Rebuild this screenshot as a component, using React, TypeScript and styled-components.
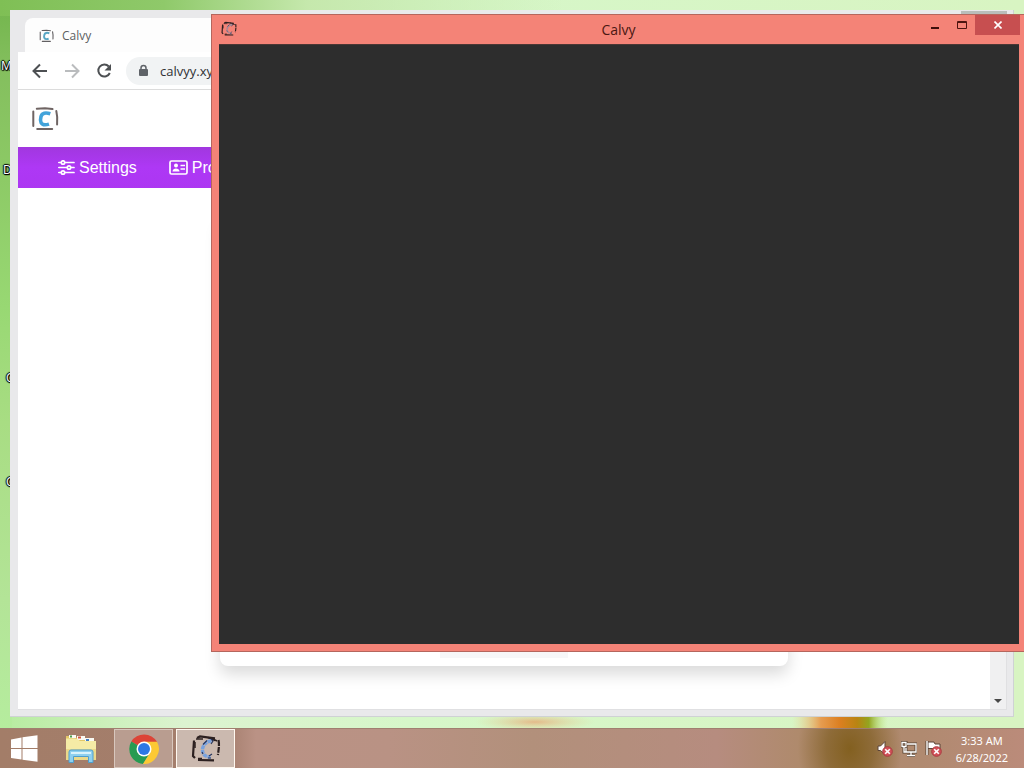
import React from 'react';
import styled, { createGlobalStyle } from 'styled-components';

const uiFont = '"Open Sans", "Noto Sans", sans-serif';

const GlobalStyle = createGlobalStyle`
  * { box-sizing: border-box; }
  body { margin: 0; overflow: hidden; font-family: ${uiFont}; }
  button { font: inherit; border: 0; padding: 0; background: none; color: inherit; }
  svg { display: block; flex: none; }
`;

const Desktop = styled.div`
  height: 100vh;
  display: flex;
  flex-direction: column;
  background:
    linear-gradient(to right, #7fbf55 0, #8fc96a 16%, #c5e8ac 30%, transparent 55%) top / 100% 16px no-repeat,
    linear-gradient(to bottom, #72b54c 0, #84bf5e 9%, #8cc965 22%, #98d873 40%, #a8dd83 55%, #b3e497 78%, #b6efa0 100%) left / 12px 100% no-repeat,
    linear-gradient(to right, #b6ec9f 0, #dcf3d0 18%, #d6f7c9 40%, #d8f4c2 100%);
`;

const Workspace = styled.main`
  flex: 1;
  min-height: 0;
  position: relative;
  overflow: hidden;
`;

const WallpaperArt = styled.svg`
  position: absolute;
  left: 0;
  bottom: 0;
  width: 100%;
  height: 12px;
`;

const DesktopLabel = styled.span<{ $x: number; $y: number }>`
  position: absolute;
  left: ${p => p.$x}px;
  top: ${p => p.$y}px;
  font-size: 12px;
  line-height: 16px;
  color: #fff;
  text-shadow: 1px 0 1px #000, -1px 0 1px #000, 0 1px 1px #000, 0 -1px 1px #000, 1px 1px 1px #000;
`;

const BrowserWindow = styled.section`
  position: absolute;
  inset: 10px 10px 11px 10px;
  display: flex;
  flex-direction: column;
  padding: 8px 6px 6px 8px;
  background: #e9e9eb;
  border: 0 solid #cfd2d4;
  border-width: 0 1px 1px 0;
`;

const WindowControlsEdge = styled.div`
  position: absolute;
  top: 1px;
  right: 6px;
  width: 46px;
  height: 4px;
  background: #b9bdba;
`;

const TabStrip = styled.div`
  display: flex;
  height: 34px;
  padding-left: 7px;
`;

const BrowserTab = styled.button`
  && { background: #fdfdfd; padding: 0 14px; }
  display: flex;
  align-items: center;
  gap: 8px;
  width: 240px;
  border-radius: 8px 8px 0 0;
  font-size: 12px;
  color: #5c5f62;
`;

const Toolbar = styled.div`
  display: flex;
  align-items: center;
  height: 38px;
  padding: 0 8px 0 14px;
  gap: 16px;
  background: #fff;
  border-bottom: 1px solid #dcdcdc;
`;

const ToolButton = styled.button`
  width: 16px;
  height: 16px;
`;

const AddressBar = styled.label`
  display: flex;
  align-items: center;
  flex: 1;
  gap: 10px;
  height: 28px;
  margin-left: -2px;
  padding-left: 12px;
  border-radius: 14px;
  background: #f1f3f4;
`;

const AddressInput = styled.input`
  flex: 1;
  min-width: 0;
  padding: 0;
  border: 0;
  outline: 0;
  background: none;
  color: #303134;
  font: 13px ${uiFont};
`;

const Page = styled.div`
  flex: 1;
  min-height: 0;
  display: flex;
  overflow: hidden;
  background: #fff;
  border: 1px solid #e0e0e2;
  border-width: 0 1px 1px 0;
`;

const PageContent = styled.div`
  flex: 1;
  min-width: 0;
  display: flex;
  flex-direction: column;
`;

const PageHeader = styled.header`
  height: 57px;
  padding: 14px 13px;
`;

const NavBar = styled.nav`
  display: flex;
  align-items: center;
  gap: 32px;
  height: 41px;
  padding-left: 40px;
  background: linear-gradient(#a137df, #ae38f5 50%, #ac36f2);
`;

const NavLink = styled.a`
  display: flex;
  align-items: center;
  gap: 4px;
  color: #fff;
  text-decoration: none;
  font: 16px "Liberation Sans", Arial, sans-serif;
`;

const CardArea = styled.div`
  flex: 1;
  display: flex;
  padding: 30px 202px 43px 202px;
`;

const Card = styled.div`
  flex: 1;
  display: flex;
  align-items: flex-end;
  justify-content: center;
  padding-bottom: 8px;
  border-radius: 8px;
  background: #fff;
  box-shadow: 0 8px 16px rgba(0, 0, 0, 0.15);
`;

const CardFooter = styled.div`
  width: 128px;
  height: 8px;
  background: #f7f7f8;
`;

const ScrollTrack = styled.div`
  width: 16px;
  display: flex;
  align-items: flex-end;
  justify-content: center;
  padding-bottom: 6px;
  background: #f0f0f1;
`;

const AppWindow = styled.section`
  position: absolute;
  inset: 14px 0 76px 211px;
  display: flex;
  flex-direction: column;
  padding: 0 5px 7px 7px;
  background: #f48377;
  border: 1px solid #b5665d;
  border-right: 0;
`;

const TitleBar = styled.header`
  display: flex;
  align-items: flex-start;
  height: 29px;
  flex: none;
  color: #4b1713;
`;

const TitleIcon = styled.div`
  width: 145px;
  padding: 6px 2px;
`;

const WindowTitle = styled.h1`
  flex: 1;
  margin: 0;
  text-align: center;
  font-size: 14px;
  line-height: 29px;
  font-weight: 400;
`;

const WindowButtons = styled.div`
  display: flex;
  justify-content: flex-end;
  width: 147px;
  margin-right: -1px;
`;

const WindowButton = styled.button<{ $close?: boolean }>`
  && { background: ${p => (p.$close ? '#c74f50' : 'none')}; }
  display: flex;
  align-items: center;
  justify-content: center;
  width: ${p => (p.$close ? 45 : 27)}px;
  height: 20px;
`;

const Canvas = styled.div`
  flex: 1;
  background: #2d2d2d;
  border: 1px solid #4b3735;
  border-width: 1px 0 0;
`;

const Taskbar = styled.footer`
  display: flex;
  align-items: stretch;
  height: 40px;
  flex: none;
  border-top: 1px solid #a07f70;
  background:
    radial-gradient(ellipse 52px 70px at 83% 50%, #836020 0, rgba(134, 100, 44, 0.8) 45%, transparent 100%),
    linear-gradient(to right, #a37d68 0, #a47e6d 22%, #ba9285 25%, #b99284 38%, #b2907b 52%, #b68c7f 70%, #af8a6c 78%, #b08a70 90%, #bb8b7a 100%);
`;

const TaskButton = styled.button<{ $state?: 'open' | 'active' }>`
  && {
    background: ${p => (p.$state === 'active' ? '#cbb9af' : p.$state ? '#b99d90' : 'none')};
    border: ${p => (p.$state ? 1 : 0)}px solid ${p => (p.$state === 'active' ? '#fff8f0' : '#d8c7bd')};
  }
  display: flex;
  align-items: center;
  justify-content: center;
  width: ${p => (p.$state ? 59 : 48)}px;
`;

const TaskGroup = styled.div`
  display: flex;
  gap: 3px;
`;

const PinnedGroup = styled.div`
  display: flex;
  gap: 9px;
  margin-right: 9px;
`;

const Tray = styled.div`
  display: flex;
  align-items: center;
  gap: 8px;
  margin-left: auto;
  padding-right: 16px;
`;

const Clock = styled.time`
  margin-left: 6px;
  color: #fff;
  font-size: 11px;
  line-height: 17px;
  text-align: center;
  font-family: "Noto Sans", sans-serif;
`;

const CalvyLogo = ({ size, frame, letter }: { size: number; frame: string; letter: string }) => (
  <svg width={size} height={size} viewBox="0 0 28 28" fill="none" strokeLinecap="round" aria-hidden="true">
    <g stroke={frame} strokeWidth="2">
      <path d="M5.800 4.800 14 4.300l7.500.8M6.200 25h15M2.300 7.500v14.500M25.300 7c1 4 1.200 9 .8 13.500" />
    </g>
    <path
      d="M19.300 9.800c-4.800-1.600-8.300-.8-9.300 2.700-.6 2.200-.7 4.600.1 6.200 1.200 2.300 4.400 2.500 7.900 1.400"
      stroke={letter}
      strokeWidth="3.600"
      strokeLinecap="butt"
      strokeLinejoin="round"
    />
  </svg>
);

const SketchLogo = ({ size, letter = '#78a2df' }: { size: number; letter?: string }) => (
  <svg width={size} height={size} viewBox="0 0 30 30" fill="none" aria-hidden="true">
    <g stroke="#2c2020" strokeWidth="2.200">
      <path d="M6 4 9 2.500l15 1.800M3 6.500 2 22l2 2M7 26l16 .3" />
      <path d="M27.500 6c1 5 .2 9-.6 15" strokeDasharray="6 1" />
      <path d="M5 5h7M17 3.500l7 3M7 24.500h4M22 5l4 2M4 8v6" strokeWidth="1.500" />
    </g>
    <path d="M20.500 7c-5 0-9 4-9 9 0 4.500 3 7 8 7" stroke={letter} strokeWidth="3.400" strokeDasharray="4 .6" />
    <path d="m20 5 2 2-2 3M18 22l3-2M16 6.500l-4 4M11 18l1 2M17 24l3 0" stroke="#26345b" strokeWidth="1.100" />
  </svg>
);

const ErrorBadge = () => (
  <g>
    <circle cx="11.500" cy="11.500" r="4.800" fill="#d3525a" stroke="#a93a40" />
    <path d="m9.200 9.200 4.600 4.600m0-4.600-4.600 4.600" stroke="#fff" strokeWidth="1.600" />
  </g>
);

const App = () => (
  <Desktop>
    <GlobalStyle />
    <Workspace>
      <WallpaperArt viewBox="0 0 1024 12" preserveAspectRatio="none" aria-hidden="true">
        <defs>
          <radialGradient id="petal">
            <stop offset="0" stopColor="#e9a070" />
            <stop offset="1" stopColor="#e9c98c" stopOpacity="0" />
          </radialGradient>
          <linearGradient id="flower">
            <stop offset="0" stopColor="#f0cf90" stopOpacity="0" />
            <stop offset=".3" stopColor="#e69c50" />
            <stop offset=".5" stopColor="#dc7f20" />
            <stop offset=".68" stopColor="#b88412" />
            <stop offset=".8" stopColor="#93a520" />
            <stop offset="1" stopColor="#bdea80" stopOpacity="0" />
          </linearGradient>
        </defs>
        <ellipse cx="535" cy="6" rx="60" ry="9" fill="url(#petal)" opacity=".7" />
        <rect x="792" y="0" width="96" height="12" fill="url(#flower)" />
      </WallpaperArt>
      <DesktopLabel $x={1} $y={58}>M</DesktopLabel>
      <DesktopLabel $x={3} $y={162}>D</DesktopLabel>
      <DesktopLabel $x={6} $y={370}>C</DesktopLabel>
      <DesktopLabel $x={6} $y={474}>C</DesktopLabel>

      <BrowserWindow aria-label="Browser">
        <WindowControlsEdge />
        <TabStrip>
          <BrowserTab>
            <CalvyLogo size={15} frame="#625f62" letter="#58a6c4" />
            Calvy
          </BrowserTab>
        </TabStrip>
        <Toolbar>
          <ToolButton aria-label="Back">
            <svg width="16" height="16" fill="none" stroke="#4d5053" strokeWidth="2">
              <path d="M15 8H2M8 1.500 1.500 8 8 14.500" />
            </svg>
          </ToolButton>
          <ToolButton aria-label="Forward">
            <svg width="16" height="16" fill="none" stroke="#babcbe" strokeWidth="2">
              <path d="M1 8h13M8 1.500 14.500 8 8 14.500" />
            </svg>
          </ToolButton>
          <ToolButton aria-label="Reload">
            <svg width="16" height="16" fill="none" stroke="#4d5053" strokeWidth="2">
              <path d="M12.800 3.500A6 6 0 1 0 13.800 10" />
              <path d="M15 1v6.500H8.500Z" fill="#4d5053" stroke="none" />
            </svg>
          </ToolButton>
          <AddressBar>
            <svg width="12" height="14" aria-hidden="true">
              <rect x="1" y="5" width="9" height="7" rx="1" fill="#5f6368" />
              <path d="M3 6V4a2.500 2.500 0 0 1 5 0v2" fill="none" stroke="#5f6368" strokeWidth="1.500" />
            </svg>
            <AddressInput aria-label="Address" defaultValue="calvyy.xyz" />
          </AddressBar>
        </Toolbar>
        <Page>
          <PageContent>
            <PageHeader>
              <CalvyLogo size={28} frame="#6f6463" letter="#42a3da" />
            </PageHeader>
            <NavBar>
              <NavLink href="#settings">
                <svg width="17" height="16" fill="none" stroke="#fff" strokeWidth="1.700" strokeLinecap="round">
                  <path d="M.8 2.500h2.400M7 2.500h9M.8 7.500h8.400M13 7.500h3M.8 12.500h2.400M7 12.500h9" />
                  <circle cx="5" cy="2.500" r="1.700" />
                  <circle cx="11" cy="7.500" r="1.700" />
                  <circle cx="5" cy="12.500" r="1.700" />
                </svg>
                Settings
              </NavLink>
              <NavLink href="#profile">
                <svg width="19" height="16" fill="none" stroke="#fff" strokeWidth="1.700">
                  <rect x="1" y="1" width="17" height="13" rx="1.500" />
                  <path d="M11.500 5.500h4.500M11.500 9h4.500" />
                  <circle cx="7" cy="5.500" r="2" fill="#fff" stroke="none" />
                  <path d="M3.500 11.500c0-4 7-4 7 0Z" fill="#fff" stroke="none" />
                </svg>
                Profile
              </NavLink>
            </NavBar>
            <CardArea>
              <Card>
                <CardFooter />
              </Card>
            </CardArea>
          </PageContent>
          <ScrollTrack>
            <svg width="8" height="4" aria-hidden="true">
              <path d="M0 0h8L4 4Z" fill="#484848" />
            </svg>
          </ScrollTrack>
        </Page>
      </BrowserWindow>

      <AppWindow aria-label="Calvy">
        <TitleBar>
          <TitleIcon>
            <SketchLogo size={16} letter="#a58996" />
          </TitleIcon>
          <WindowTitle>Calvy</WindowTitle>
          <WindowButtons>
            <WindowButton aria-label="Minimize">
              <svg width="8" height="12">
                <path d="M0 9h8" stroke="#3d0f0b" strokeWidth="2" />
              </svg>
            </WindowButton>
            <WindowButton aria-label="Maximize">
              <svg width="10" height="8" fill="none" stroke="#4d1510">
                <path d="M.5.5h9v7h-9ZM0 1.500h10" />
              </svg>
            </WindowButton>
            <WindowButton $close aria-label="Close">
              <svg width="8" height="8">
                <path d="m.5.5 7 7m0-7-7 7" stroke="#fff" strokeWidth="1.600" />
              </svg>
            </WindowButton>
          </WindowButtons>
        </TitleBar>
        <Canvas />
      </AppWindow>
    </Workspace>

    <Taskbar>
      <PinnedGroup>
        <TaskButton aria-label="Start">
          <svg width="28" height="28" fill="#fff">
            <path d="m1 4.500 10.500-2V13H1ZM12.500 2.300 27.500.2V13h-15ZM1 14h10.500v10.500L1 23ZM12.500 14h15v12.800l-15-2.100Z" />
          </svg>
        </TaskButton>
        <TaskButton aria-label="File Explorer">
          <svg width="32" height="30">
            <path d="M1 4V2h9l2 2h17v3H1Z" fill="#e3c767" />
            <path d="M4 1h7v3H4Z" fill="#f9faf3" />
            <path d="M5 1.500h2v2H5Z" fill="#4c9c4c" />
            <path d="M12 2h8v4h-8Z" fill="#f9faf3" />
            <path d="M13 2.500h3v2h-3Z" fill="#d4563e" />
            <path d="M20 4h9v4h-9Z" fill="#f9faf3" />
            <path d="M21 5h3v2h-3Z" fill="#4380c5" />
            <path d="M1 4.500h9q3 0 5 2.500h16v19H1Z" fill="#f5eba6" />
            <path d="M1 15h30v11H1Z" fill="#ead88a" />
            <path d="M4 28.500V18q0-2 2-2h20q2 0 2 2v10.500h-4.500V22.500h-15v6Z" fill="#8ed0ef" stroke="#4e9fce" />
            <path d="M6 19h20" stroke="#d8f3fc" strokeWidth="2" />
          </svg>
        </TaskButton>
      </PinnedGroup>
      <TaskGroup>
        <TaskButton $state="open" aria-label="Chrome">
          <svg width="30" height="30">
            <path d="M15 15 2.300 7.500A15 15 0 0 1 28 7.800Z" fill="#dc4437" />
            <path d="M2.300 7.500A15 15 0 0 0 14 30l7.500-12L15 15Z" fill="#279b52" />
            <path d="M15 7.800h13A15 15 0 0 1 14 30l7.500-12Z" fill="#fcc934" />
            <circle cx="15" cy="15" r="7.500" fill="#fff" />
            <circle cx="15" cy="15" r="6" fill="#2e78e4" />
          </svg>
        </TaskButton>
        <TaskButton $state="active" aria-label="Calvy">
          <SketchLogo size={30} />
        </TaskButton>
      </TaskGroup>
      <Tray>
        <svg width="17" height="17" role="img" aria-label="Muted">
          <path d="M2 6h2.500L9 1.500v13L4.500 10.500H2Z" fill="#fff" stroke="#5b4538" />
          <ErrorBadge />
        </svg>
        <svg width="16" height="16" fill="none" role="img" aria-label="Network">
          <path d="M6 3h9v8H5V7M10 11v3M6 14.500h8M1 1.500h4v4H1ZM3 6v5h2" stroke="#594435" strokeWidth="3" />
          <path d="M6 3h9v8H5V7M10 11v3M6 14.500h8M1 1.500h4v4H1ZM3 6v5h2" stroke="#fff" strokeWidth="1.300" />
        </svg>
        <svg width="17" height="17" role="img" aria-label="Action Center">
          <path d="M2 1v14" stroke="#594435" strokeWidth="3" />
          <path d="M3 2h6l1 2h5v6H9L8 8.500H3Z" fill="#fff" stroke="#5b4538" />
          <path d="M2 1v14" stroke="#fff" strokeWidth="1.400" />
          <ErrorBadge />
        </svg>
        <Clock>
          3:33 AM
          <br />
          6/28/2022
        </Clock>
      </Tray>
    </Taskbar>
  </Desktop>
);

export default App;
